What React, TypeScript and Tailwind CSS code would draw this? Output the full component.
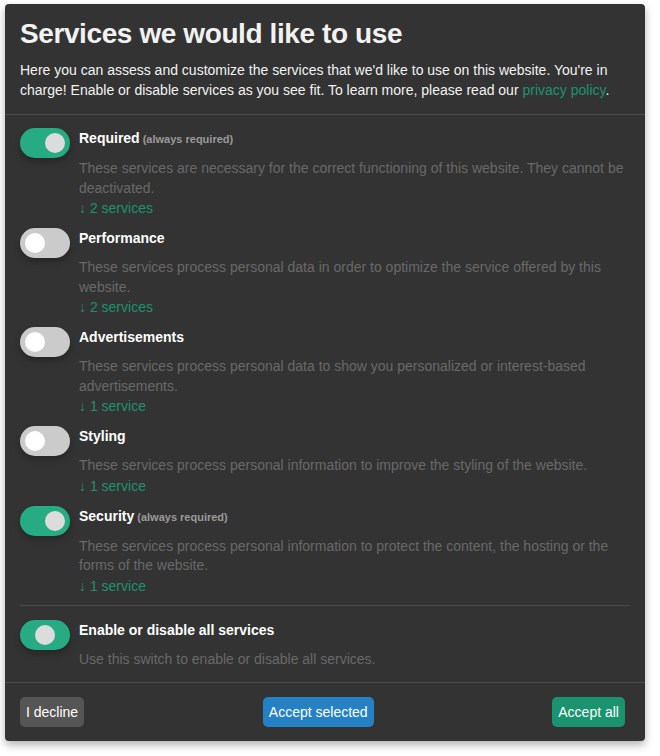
import type { ReactNode } from "react";

type Purpose = {
  title: string;
  required?: boolean;
  on?: boolean;
  description: string;
  count: string;
};

const purposes: Purpose[] = [
  {
    title: "Required",
    required: true,
    on: true,
    description:
      "These services are necessary for the correct functioning of this website. They cannot be deactivated.",
    count: "2 services",
  },
  {
    title: "Performance",
    description:
      "These services process personal data in order to optimize the service offered by this website.",
    count: "2 services",
  },
  {
    title: "Advertisements",
    description:
      "These services process personal data to show you personalized or interest-based advertisements.",
    count: "1 service",
  },
  {
    title: "Styling",
    description: "These services process personal information to improve the styling of the website.",
    count: "1 service",
  },
  {
    title: "Security",
    required: true,
    on: true,
    description:
      "These services process personal information to protect the content, the hosting or the forms of the website.",
    count: "1 service",
  },
];

function Toggle({ on, half }: { on?: boolean; half?: boolean }) {
  const track = on || half ? "bg-[#27ab83]" : "bg-[#cbcbcb]";
  const knob = on ? "left-[25px] bg-[#dcdcdc]" : half ? "left-[15px] bg-[#dcdcdc]" : "left-[5px] bg-white";
  return (
    <div className={`relative h-[30px] w-[50px] shrink-0 rounded-full shadow-[0_4px_6px_rgba(0,0,0,0.25)] ${track}`}>
      <span className={`absolute top-[5px] h-5 w-5 rounded-full ${knob}`} />
    </div>
  );
}

function Row({ toggle, children }: { toggle: ReactNode; children: ReactNode }) {
  return (
    <li className="flex gap-[9px]">
      {toggle}
      <div className="min-w-0 flex-1">{children}</div>
    </li>
  );
}

function Button({ className, children }: { className: string; children: ReactNode }) {
  return (
    <button className={`rounded-[5px] px-[6px] py-[6px] text-[14px] leading-[18px] text-white ${className}`}>
      {children}
    </button>
  );
}

export default function App() {
  return (
    <div className="min-h-screen bg-white pl-[5px] pt-1 font-['Liberation_Sans',Arial,sans-serif]">
      <div className="w-[640px] rounded-[4px] bg-[#333333] text-[14px] shadow-[0_4px_8px_rgba(0,0,0,0.3)]">
        {/* Header */}
        <header className="border-b border-[#4b4b4b] px-[15px] pb-[14px] pt-[13px]">
          <h1 className="text-[28px] font-bold leading-[34px] tracking-[-0.4px] text-[#f2f2f2]">
            Services we would like to use
          </h1>
          <p className="mt-[10px] leading-[19.5px] text-[#f2f2f2]">
            Here you can assess and customize the services that we'd like to use on this website. You're in charge!
            Enable or disable services as you see fit. To learn more, please read our{" "}
            <a className="text-[#1a936f]">privacy policy</a>.
          </p>
        </header>

        {/* Purposes */}
        <div className="px-[15px] pt-[13px]">
          <ul className="flex flex-col gap-[10px]">
            {purposes.map((p) => (
              <Row key={p.title} toggle={<Toggle on={p.on} />}>
                <p className="leading-5">
                  <span className="font-bold text-white">{p.title}</span>
                  {p.required && (
                    <span className="ml-[3px] text-[11px] font-bold text-[#9a9a9a]">(always required)</span>
                  )}
                </p>
                <p className="mt-[10px] leading-[19.5px] text-[#696969]">{p.description}</p>
                <p className="leading-5 text-[#1a936f]">↓ {p.count}</p>
              </Row>
            ))}
          </ul>

          <div className="mt-[9px] border-t border-[#4b4b4b] pb-[13px] pt-[14px]">
            <ul>
              <Row toggle={<Toggle half />}>
                <p className="leading-5 font-bold text-white">Enable or disable all services</p>
                <p className="mt-[10px] leading-[19.5px] text-[#696969]">
                  Use this switch to enable or disable all services.
                </p>
              </Row>
            </ul>
          </div>
        </div>

        {/* Footer */}
        <footer className="flex items-center justify-between border-t border-[#4b4b4b] pb-[14px] pl-[15px] pr-[20px] pt-[14px]">
          <Button className="bg-[#555555]">I decline</Button>
          <Button className="bg-[#2581c4]">Accept selected</Button>
          <Button className="bg-[#1a936f]">Accept all</Button>
        </footer>
      </div>
    </div>
  );
}
